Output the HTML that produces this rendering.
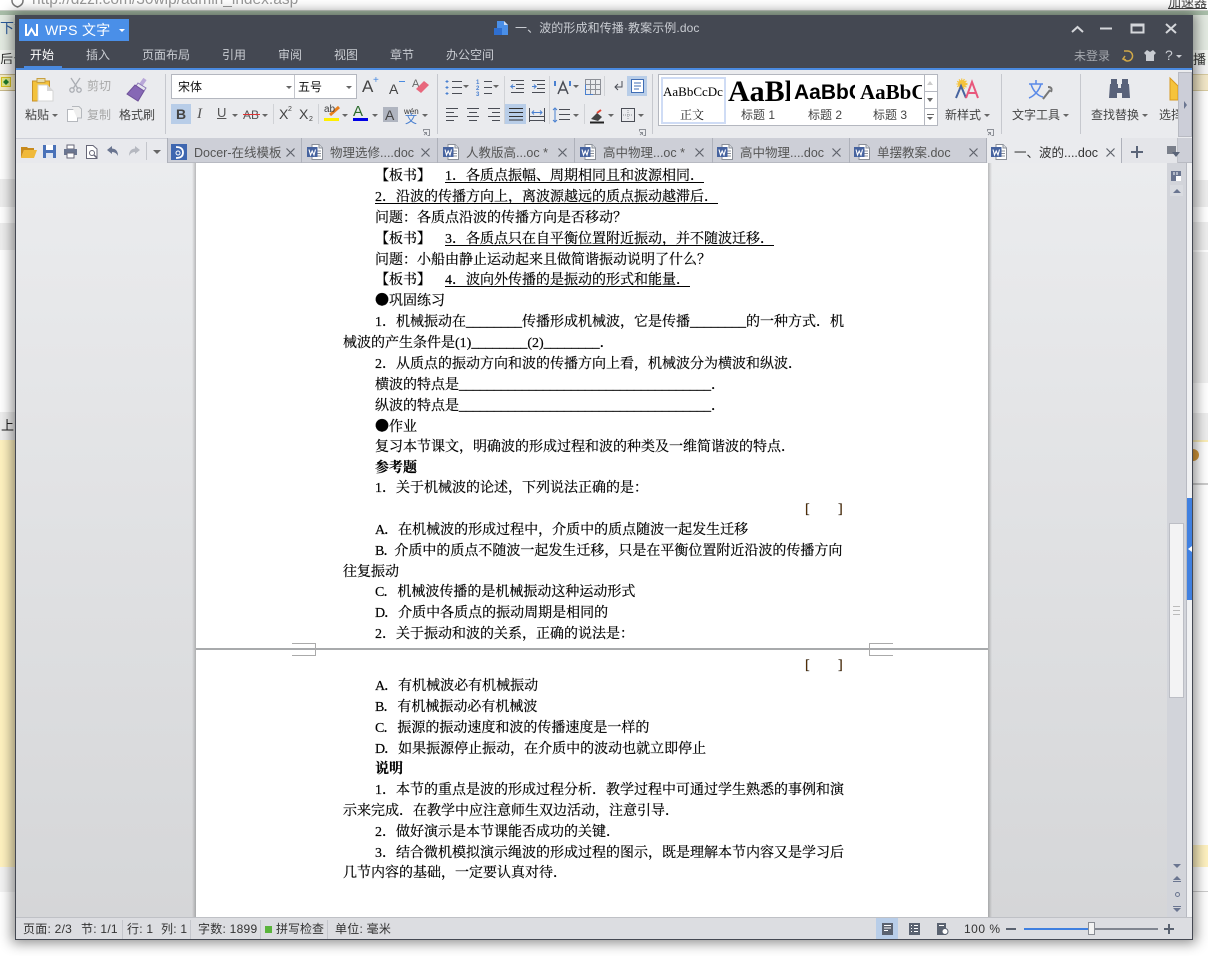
<!DOCTYPE html>
<html lang="zh-CN"><head><meta charset="utf-8"><title>WPS 文字</title>
<style>
html,body{margin:0;padding:0}
body{width:1208px;height:956px;position:relative;overflow:hidden;background:#fff;font-family:"Liberation Sans","Noto Sans CJK SC",sans-serif}
.a{position:absolute}
.t{position:absolute;white-space:pre;font:12px/16px "Liberation Sans","Noto Sans CJK SC",sans-serif;color:#444}
.l{position:absolute;left:375px;margin-top:2px;white-space:pre;font:14px/20px "Liberation Serif","Noto Serif CJK SC",serif;color:#000;-webkit-text-stroke:.2px #000}
.l u{text-underline-offset:2px}
.l b{font-family:"Noto Sans CJK SC",sans-serif;font-weight:normal;font-size:14px}
.l i{font-style:normal;letter-spacing:-1px}
.m{color:#c9ccd2}
.dn{position:absolute;width:0;height:0;border-left:3px solid transparent;border-right:3px solid transparent;border-top:3px solid #666}
.sep{position:absolute;width:1px;background:#c6c8ce}
.tabsep{position:absolute;top:138px;width:1px;height:25px;background:#aeb1ba}
.st{letter-spacing:.25px;color:#333}
svg{position:absolute;overflow:visible}
</style></head><body>
<svg width="0" height="0" style="position:absolute"><defs>
<symbol id="doc" viewBox="0 0 16 16" overflow="visible"><path d="M5 .5H12L15.5 4V15.5H5Z" fill="#fff" stroke="#8a8f98"/><path d="M12 .5V4H15.5" fill="#dfe1e5" stroke="#8a8f98"/><path d="M10 7H14M10 9.5H14M10 12H14" stroke="#8a8f98"/><rect x="0" y="3" width="10.500" height="10" fill="#46639f"/><path d="M2 5.500L3.500 11 5.200 7 7 11 8.500 5.500" fill="none" stroke="#fff" stroke-width="1.100"/></symbol>
<symbol id="cl" viewBox="0 0 9 9" overflow="visible"><path d="M.5 .5L8.500 8.500M8.500 .5L.5 8.500" stroke="#5f636c" stroke-width="1.200" fill="none"/></symbol>
<symbol id="lau" viewBox="0 0 7 7" overflow="visible"><path d="M.5 2.500V.5H6.500V6.500H4.500" fill="none" stroke="#8d9097"/><path d="M1 6L3.500 3.500M3.500 6V3.500H1" fill="none" stroke="#8d9097"/></symbol>
</defs></svg>

<!-- background browser -->
<div class="a" style="left:0;top:0;width:1208px;height:956px;background:#fff"></div>
<div class="a" style="left:0;top:0;width:1208px;height:50px;background:#e4ebe2"></div>
<div class="a" style="left:0;top:50px;width:1208px;height:14px;background:#f3f6f2"></div>
<div class="a" style="left:0;top:0;width:1208px;height:10px;background:#fff;border-bottom:1px solid #c9cfc7"></div>
<div class="a" style="left:0;top:11px;width:1208px;height:4px;background:#a9bea9"></div>
<div class="t" style="left:32px;top:-8px;font-size:15.500px;color:#999">http://dzzi.com/30wip/admin_index.asp</div>
<svg style="left:11px;top:-6px" width="13" height="13"><path d="M6.500 0L12 2V7Q12 11 6.500 13 1 11 1 7V2Z" fill="none" stroke="#777" stroke-width="1.500"/></svg>
<div class="t" style="left:0;top:20px;font-size:14px;color:#2a5a9c">下载</div>
<div class="t" style="left:0;top:52px;font-size:13px;color:#333">后台</div>
<div class="a" style="left:0;top:64px;width:1208px;height:10px;background:#f5f5f5"></div>
<div class="a" style="left:0;top:74px;width:15px;height:15px;background:#f6edc8;border-top:1px solid #c9b98a;border-bottom:1px solid #c9b98a"></div>
<div class="a" style="left:1px;top:77px;width:8px;height:8px;background:#dfe88a;border:1px solid #d8c020"></div>
<svg style="left:3px;top:79px" width="6" height="6"><path d="M3 0V6L0 3ZM3 0L6 3 3 6Z" fill="#1d7a2a"/></svg>
<div class="a" style="left:0;top:179px;width:15px;height:28px;background:#eee"></div>
<div class="a" style="left:0;top:223px;width:15px;height:27px;background:#eee"></div>
<div class="a" style="left:0;top:412px;width:15px;height:28px;background:#eee"></div>
<div class="a" style="left:0;top:440px;width:15px;height:427px;background:#fff2c0"></div>
<div class="a" style="left:0;top:867px;width:15px;height:25px;background:#f3f3f3"></div>
<div class="t" style="left:1px;top:418px;color:#222;font-size:13px">上</div>
<div class="a" style="left:1193px;top:180px;width:15px;height:27px;background:#eee"></div>
<div class="a" style="left:1193px;top:222px;width:15px;height:28px;background:#eee"></div>
<div class="a" style="left:1193px;top:252px;width:15px;height:131px;background:#f0f0f0"></div>
<div class="a" style="left:1193px;top:413px;width:15px;height:27px;background:#eee"></div>
<div class="a" style="left:1193px;top:440px;width:15px;height:2px;background:#fbeeb8"></div>
<div class="a" style="left:1193px;top:483px;width:15px;height:2px;background:#ccc"></div>
<div class="a" style="left:1193px;top:449px;width:6px;height:12px;background:#d79a3c;border-radius:0 6px 6px 0"></div>
<div class="a" style="left:1193px;top:845px;width:15px;height:22px;background:#fff2c0"></div>
<div class="a" style="left:1193px;top:891px;width:15px;height:1px;background:#ccc"></div>
<div class="a" style="left:1193px;top:74px;width:15px;height:15px;background:#f3e8c8;border-top:1px solid #d8cba0;border-bottom:1px solid #d8cba0"></div>
<div class="t" style="left:1193px;top:52px;font-size:13px;color:#333">播</div>
<div class="a" style="left:1168px;top:0;width:40px;height:10px;background:#fff"></div>
<div class="t" style="left:1168px;top:-5px;font-size:13px;color:#444"><u>加速器</u></div>

<!-- window -->
<div class="a" style="left:15px;top:15px;width:1178px;height:925px;background:#eaebee;box-shadow:0 0 12px 3px rgba(0,0,0,.45)"></div>
<div class="a" style="left:15px;top:15px;width:1178px;height:53px;background:#444852"></div>
<div class="a" style="left:15px;top:68px;width:1178px;height:2px;background:#4a8ae0"></div>
<div class="a" style="left:19px;top:19px;width:110px;height:22px;background:#4a8fe8"></div>
<svg style="left:25px;top:23px" width="13" height="13"><path d="M1 1V12H3L6.500 6 10 12H12V1" fill="none" stroke="#fff" stroke-width="2"/></svg>
<div class="t" style="left:45px;top:22px;font-size:14px;color:#fff;letter-spacing:.3px">WPS 文字</div>
<div class="a" style="left:119px;top:29px;border-left:3px solid transparent;border-right:3px solid transparent;border-top:3px solid #fff"></div>
<svg style="left:494px;top:21px" width="14" height="14"><path d="M3 0H10L14 4V14H3Z" fill="#4a8fe8"/><path d="M10 0V4H14" fill="#cfe0f8"/><rect x="0" y="7" width="8" height="7" fill="#2f6fd0"/></svg>
<div class="t m" style="left:515px;top:20px;font-size:12px;letter-spacing:.1px">一、波的形成和传播·教案示例.doc</div>
<svg style="left:1071px;top:23px" width="110" height="12" fill="none" stroke="#d4d6da" stroke-width="2"><path d="M1 9L6.500 4 12 9"/><path d="M29 5.500H41"/><path d="M60.500 1.500H72.500V9.500H60.500Z"/><path d="M60.500 2.500H72.500" stroke-width="2"/><path d="M95 1L105 10M105 1L95 10"/></svg>
<div class="t" style="left:30px;top:47px;color:#fff">开始</div>
<div class="t m" style="left:86px;top:47px">插入</div>
<div class="t m" style="left:142px;top:47px">页面布局</div>
<div class="t m" style="left:222px;top:47px">引用</div>
<div class="t m" style="left:278px;top:47px">审阅</div>
<div class="t m" style="left:334px;top:47px">视图</div>
<div class="t m" style="left:390px;top:47px">章节</div>
<div class="t m" style="left:446px;top:47px">办公空间</div>
<div class="a" style="left:24px;top:66px;width:38px;height:2px;background:#4a8ae0"></div>
<div class="t" style="left:1074px;top:48px;color:#a6a9af">未登录</div>
<svg style="left:1122px;top:50px" width="12" height="12" fill="none" stroke="#d0a848" stroke-width="1.500"><path d="M2 1H6A5 5 0 1 1 1 8"/><path d="M3 6L1 9 4 10"/></svg>
<svg style="left:1144px;top:50px" width="12" height="11"><path d="M3 0L0 3 2 5V11H10V5L12 3 9 0 6 2Z" fill="#c9ccd2"/></svg>
<div class="t" style="left:1165px;top:47px;font-size:14px;color:#c9ccd2">?</div>
<div class="a" style="left:1176px;top:55px;border-left:3px solid transparent;border-right:3px solid transparent;border-top:3px solid #c9ccd2"></div>

<!-- ribbon -->
<div class="a" style="left:15px;top:70px;width:1178px;height:68px;background:#eaebee;border-bottom:1px solid #bfc1c8"></div>
<div class="sep" style="left:165px;top:74px;height:60px"></div>
<div class="sep" style="left:437px;top:74px;height:60px"></div>
<div class="sep" style="left:652px;top:74px;height:60px"></div>
<div class="sep" style="left:1001px;top:74px;height:60px"></div>
<div class="sep" style="left:1080px;top:74px;height:60px"></div>
<div class="sep" style="left:504px;top:76px;height:48px;background:#d0d2d6"></div>
<div class="sep" style="left:549px;top:76px;height:48px;background:#d0d2d6"></div>
<div class="sep" style="left:604px;top:76px;height:20px;background:#d0d2d6"></div>
<div class="sep" style="left:584px;top:104px;height:20px;background:#d0d2d6"></div>
<div class="sep" style="left:273px;top:104px;height:20px;background:#d0d2d6"></div>
<div class="sep" style="left:318px;top:104px;height:20px;background:#d0d2d6"></div>

<svg style="left:32px;top:78px" width="22" height="24"><rect x="0.500" y="3" width="17" height="20" fill="#f3c23c" stroke="#c8922a"/><rect x="5" y="0.500" width="8" height="4" fill="#e7dcae" stroke="#c8a040"/><path d="M6 7H15L21 13V23H6Z" fill="#fff" stroke="#d4d4d4"/><path d="M15 7V13H21" fill="#d8d8d8"/></svg>
<div class="t" style="left:25px;top:107px">粘贴</div><div class="dn" style="left:52px;top:114px"></div>
<svg style="left:69px;top:78px" width="13" height="15" fill="none" stroke="#aaadb3" stroke-width="1.300"><path d="M2 0L8.500 10M11 0L4.500 10"/><circle cx="3" cy="12" r="2.200"/><circle cx="10" cy="12" r="2.200"/></svg>
<div class="t" style="left:87px;top:78px;color:#a8a8a8">剪切</div>
<svg style="left:67px;top:106px" width="15" height="16"><rect x="0.500" y="3.500" width="10" height="12" fill="#fff" stroke="#b5b8bd"/><path d="M5 .5H12L14.500 3V12H10" fill="#eee" stroke="#b5b8bd"/></svg>
<div class="t" style="left:87px;top:107px;color:#a8a8a8">复制</div>
<svg style="left:127px;top:78px" width="21" height="23"><path d="M13 8L18 1" stroke="#b9a8d8" stroke-width="4"/><path d="M11 5L19 10 17 13 9 8Z" fill="#e6e6ee" stroke="#8d7ab8"/><path d="M8 7L17 13 11 23 0 16Z" fill="#8668b5" stroke="#6f5299"/></svg>
<div class="t" style="left:119px;top:107px">格式刷</div>

<div class="a" style="left:171px;top:74px;width:184px;height:23px;background:#fff;border:1px solid #b4b7bf"></div>
<div class="sep" style="left:294px;top:75px;height:23px;background:#c4c6cc"></div>
<div class="t" style="left:178px;top:79px;color:#111">宋体</div><div class="dn" style="left:286px;top:86px"></div>
<div class="t" style="left:298px;top:79px;color:#111">五号</div><div class="dn" style="left:346px;top:86px"></div>
<div class="t" style="left:362px;top:79px;font-size:17px;color:#444">A</div><div class="t" style="left:373px;top:73px;font-size:10px;color:#4a8ae0">+</div>
<div class="t" style="left:389px;top:81px;font-size:14px;color:#444">A</div><div class="a" style="left:399px;top:81px;width:6px;height:1px;background:#4a8ae0"></div>
<div class="t" style="left:412px;top:76px;font-size:11px;color:#666">A</div>
<svg style="left:416px;top:81px" width="13" height="12"><path d="M8 0L13 4 5 12 0 8Z" fill="#e8677c"/></svg>

<div class="a" style="left:171px;top:104px;width:20px;height:20px;background:#b8cde8"></div>
<div class="t" style="left:176px;top:106px;font-size:14px;font-weight:bold;color:#444">B</div>
<div class="t" style="left:197px;top:106px;font:italic 15px/16px 'Liberation Serif',serif;color:#555">I</div>
<div class="t" style="left:217px;top:105px;font-size:13px;color:#555"><u>U</u></div><div class="dn" style="left:232px;top:114px"></div>
<div class="t" style="left:243px;top:107px;font-size:12px;color:#555">AB</div><div class="a" style="left:243px;top:114px;width:17px;height:1px;background:#d33"></div><div class="dn" style="left:262px;top:114px"></div>
<div class="t" style="left:279px;top:106px;font-size:14px;color:#444">X</div><div class="t" style="left:288px;top:102px;font-size:7px;color:#444">2</div>
<div class="t" style="left:299px;top:106px;font-size:14px;color:#444">X</div><div class="t" style="left:309px;top:112px;font-size:7px;color:#444">2</div>
<svg style="left:324px;top:106px" width="16" height="15"><path d="M15 1L6 9" stroke="#e87f1c" stroke-width="3"/><rect x="0" y="12" width="15" height="3" fill="#ffef00"/></svg>
<div class="t" style="left:324px;top:102px;font-size:10px;color:#444">ab</div><div class="dn" style="left:342px;top:114px"></div>
<div class="t" style="left:353px;top:104px;font-size:15px;color:#2a6a2a">A</div><div class="a" style="left:353px;top:118px;width:15px;height:3px;background:#0000e6"></div><div class="dn" style="left:372px;top:114px"></div>
<div class="a" style="left:383px;top:107px;width:15px;height:15px;background:#b0b5c0"></div><div class="t" style="left:385px;top:107px;font-size:14px;color:#444">A</div>
<div class="t" style="left:404px;top:104px;font-size:8px;color:#333">wén</div><div class="t" style="left:405px;top:111px;font-size:12px;color:#4a80d0">文</div><div class="dn" style="left:422px;top:114px"></div>
<svg style="left:423px;top:129px" width="7" height="7"><use href="#lau"/></svg>

<!-- paragraph group -->
<svg style="left:445px;top:79px" width="200" height="16" fill="none" stroke="#4a4d55">
<path d="M7 2.500H17M7 8.500H17M7 14.500H17"/><path d="M2 1V4M2 7V10M2 13V16M.5 2.500H3.500M.5 8.500H3.500M.5 14.500H3.500" stroke="#4a80d0"/>
<path d="M39 2.500H47M39 8.500H47M39 14.500H47"/><text x="31" y="5" font-size="6" font-weight="bold" fill="#4a80d0" stroke="none" font-family="Liberation Sans">1</text><text x="31" y="11" font-size="6" font-weight="bold" fill="#4a80d0" stroke="none" font-family="Liberation Sans">2</text><text x="31" y="17" font-size="6" font-weight="bold" fill="#4a80d0" stroke="none" font-family="Liberation Sans">3</text>
<path d="M66 1.500H79M71 5.500H79M71 9.500H79M66 13.500H79"/><path d="M70 7.500H66L68 5.500M66 7.500L68 9.500" stroke="#4a80d0"/>
<path d="M87 1.500H100M92 5.500H100M92 9.500H100M87 13.500H100"/><path d="M87 7.500H91L89 5.500M91 7.500L89 9.500" stroke="#4a80d0"/>
<path d="M113 15L118 3 123 15M115 11H121" stroke-width="1.500"/><path d="M110 2V7M125 2V7" stroke="#4a80d0" stroke-width="2"/>
<path d="M140.500 .5H155.500V15.500H140.500ZM145.500 .5V15.500M150.500 .5V15.500M140.500 5.500H155.500M140.500 10.500H155.500" stroke="#8d9097"/><path d="M140.500 5.500V15.500H148" stroke="#4a80d0"/>
<path d="M177 2V8H170M173 5L170 8 173 11"/>
</svg>
<div class="dn" style="left:463px;top:85px"></div><div class="dn" style="left:493px;top:85px"></div><div class="dn" style="left:573px;top:85px"></div>
<div class="a" style="left:627px;top:76px;width:20px;height:20px;background:#b8cde8"></div>
<svg style="left:631px;top:79px" width="13" height="14" fill="none" stroke="#3f6db5"><rect x=".5" y=".5" width="12" height="13" fill="#fff"/><path d="M3 4H10M3 7H10M3 10H8"/></svg>
<svg style="left:446px;top:107px" width="200" height="16" fill="none" stroke="#4a4d55">
<path d="M0 1.500H12M0 5.500H8M0 9.500H12M0 13.500H8"/><path d="M21 1.500H33M23 5.500H31M21 9.500H33M23 13.500H31"/><path d="M42 1.500H54M46 5.500H54M42 9.500H54M46 13.500H54"/>
<path d="M83.500 1V15M98.500 1V15M84 13.500H98M84 9.500H98"/><path d="M86 5.500H96M88 3.500L86 5.500 88 7.500M94 3.500L96 5.500 94 7.500" stroke="#4a80d0"/>
<path d="M113 2.500H124M113 7.500H124M113 12.500H124"/><path d="M111 1V15M109 3L111 1 113 3M109 13L111 15 113 13" stroke="#4a80d0" transform="translate(-2 0)"/>
<path d="M145 12L151 6 156 10 152 14Z" fill="#444" stroke="none"/><path d="M144 15.500H158" stroke-width="2" stroke="#222"/><path d="M151 6L155 3" stroke="#d43" stroke-width="2"/>
<path d="M175.500 1.500H188.500V14.500H175.500Z"/><path d="M182 3V13M177 8H187" stroke-dasharray="1 1" stroke="#8d9097"/>
</svg>
<div class="a" style="left:505px;top:104px;width:21px;height:20px;background:#b8cde8"></div>
<svg style="left:509px;top:108px" width="14" height="12" stroke="#333"><path d="M0 .5H14M0 4.500H14M0 8.500H14M0 12H14"/></svg>
<div class="dn" style="left:573px;top:114px"></div><div class="dn" style="left:608px;top:114px"></div><div class="dn" style="left:638px;top:114px"></div>
<svg style="left:639px;top:129px" width="7" height="7"><use href="#lau"/></svg>

<!-- style gallery -->
<div class="a" style="left:658px;top:74px;width:278px;height:50px;background:#fff;border:1px solid #b4b7bf"></div>
<div class="a" style="left:661px;top:77px;width:61px;height:43px;border:2px solid #cfdcf5"></div>
<div class="a" style="left:663px;top:83px;width:60px;height:18px;overflow:hidden;white-space:pre;font:13px/18px 'Liberation Serif',serif;color:#000">AaBbCcDc</div>
<div class="t" style="left:680px;top:107px;color:#222;font-family:'Noto Serif CJK SC',serif">正文</div>
<div class="a" style="left:728px;top:74px;width:62px;height:36px;overflow:hidden;white-space:pre;font:bold 30px/36px 'Liberation Serif',serif;color:#000">AaBl</div>
<div class="t" style="left:741px;top:107px">标题 1</div>
<div class="a" style="left:794px;top:80px;width:61px;height:25px;overflow:hidden;white-space:pre;font:bold 21px/25px 'Liberation Sans',sans-serif;color:#000">AaBbC</div>
<div class="t" style="left:808px;top:107px">标题 2</div>
<div class="a" style="left:860px;top:80px;width:62px;height:25px;overflow:hidden;white-space:pre;font:bold 21px/25px 'Liberation Serif',serif;color:#000">AaBbC</div>
<div class="t" style="left:873px;top:107px">标题 3</div>
<div class="a" style="left:924px;top:75px;width:12px;height:50px;background:#fff;border-left:1px solid #b4b7bf"></div>
<div class="a" style="left:924px;top:91px;width:13px;height:1px;background:#b4b7bf"></div>
<div class="a" style="left:924px;top:108px;width:13px;height:1px;background:#b4b7bf"></div>
<div class="a" style="left:927px;top:81px;border-left:3px solid transparent;border-right:3px solid transparent;border-bottom:4px solid #ccc"></div>
<div class="a" style="left:927px;top:98px;border-left:3px solid transparent;border-right:3px solid transparent;border-top:4px solid #666"></div>
<div class="a" style="left:927px;top:114px;width:7px;height:1px;background:#666"></div>
<div class="a" style="left:927px;top:117px;border-left:3px solid transparent;border-right:3px solid transparent;border-top:3px solid #666"></div>
<svg style="left:987px;top:129px" width="7" height="7"><use href="#lau"/></svg>

<svg style="left:955px;top:78px" width="26" height="21"><circle cx="7" cy="6" r="4" fill="#f5c33c" stroke="#f5c33c" stroke-dasharray="1 1" stroke-width="3"/><path d="M1 20L6 8 11 20" stroke="#46639f" stroke-width="2" fill="none"/><path d="M11 20L17 4 23 20M13 15H21" stroke="#e8577c" stroke-width="2" fill="none"/></svg>
<div class="t" style="left:945px;top:107px">新样式</div><div class="dn" style="left:984px;top:114px"></div>
<svg style="left:1029px;top:78px" width="24" height="24" fill="none"><path d="M0 6H14M7 2V6M2 6C4 13 9 18 14 19M12 6C10 13 5 18 0 20" stroke="#5a8ae8" stroke-width="1.500"/><path d="M14 21L21 12M19 9Q24 9 22 14" stroke="#777" stroke-width="2"/></svg>
<div class="t" style="left:1012px;top:107px">文字工具</div><div class="dn" style="left:1063px;top:114px"></div>
<svg style="left:1109px;top:79px" width="21" height="20" fill="#59627a"><rect x="2" y="0" width="6" height="5"/><rect x="13" y="0" width="6" height="5"/><path d="M1 5H9V9H12V5H20L21 19H13V14H8V19H0Z"/></svg>
<div class="t" style="left:1091px;top:107px">查找替换</div><div class="dn" style="left:1142px;top:114px"></div>
<svg style="left:1170px;top:78px" width="8" height="22"><path d="M0 0L8 8V22H0Z" fill="#f5c33c" stroke="#d89a20"/></svg>
<div class="a" style="left:1159px;top:107px;width:19px;height:16px;overflow:hidden;white-space:pre;font:12px/16px 'Liberation Sans','Noto Sans CJK SC',sans-serif;color:#444">选择</div>
<div class="a" style="left:1178px;top:72px;width:14px;height:65px;background:#ccced8;border:1px solid #b8bac2;box-sizing:border-box"></div>
<div class="a" style="left:1184px;top:101px;border-top:4px solid transparent;border-bottom:4px solid transparent;border-left:3px solid #6a7590"></div>

<!-- tab bar -->
<div class="a" style="left:15px;top:138px;width:1178px;height:25px;background:#cdcfd7;border-bottom:1px solid #b8bac2;box-sizing:border-box"></div>
<div class="a" style="left:15px;top:139px;width:152px;height:24px;background:#e8e9ed"></div>
<svg style="left:21px;top:145px" width="16" height="13"><path d="M0 2H6L7 3H13V5H3L0 13Z" fill="#c88a1c"/><path d="M3 5H16L13 13H0Z" fill="#f0b93a"/></svg>
<svg style="left:43px;top:145px" width="13" height="13"><rect width="13" height="13" fill="#4a72b8"/><rect x="3" y="0" width="7" height="5" fill="#fff"/><rect x="3" y="8" width="7" height="5" fill="#dfe6f2"/></svg>
<svg style="left:64px;top:145px" width="13" height="13"><rect x="3" y="0" width="7" height="4" fill="#fff" stroke="#667"/><rect x="0" y="4" width="13" height="6" fill="#6a7590"/><rect x="3" y="8" width="7" height="5" fill="#fff" stroke="#667"/></svg>
<svg style="left:86px;top:145px" width="12" height="14" fill="none" stroke="#667"><path d="M.5 .5H7L11 4V13.500H.5Z" fill="#fff"/><circle cx="6" cy="8" r="2.500"/><path d="M8 10L11 13" stroke-width="1.500"/></svg>
<svg style="left:107px;top:146px" width="11" height="10"><path d="M0 4L5 0V2.500Q11 3 11 10 9 6 5 6V8Z" fill="#6a7590"/></svg>
<svg style="left:129px;top:146px" width="11" height="10"><path d="M11 4L6 0V2.500Q0 3 0 10 2 6 6 6V8Z" fill="#b5b8c0"/></svg>
<div class="a" style="left:146px;top:142px;width:1px;height:18px;background:#c4c6cc"></div>
<div class="a" style="left:153px;top:150px;border-left:4px solid transparent;border-right:4px solid transparent;border-top:4px solid #666"></div>
<div class="tabsep" style="left:167px"></div><div class="tabsep" style="left:301px"></div><div class="tabsep" style="left:437px"></div><div class="tabsep" style="left:574px"></div><div class="tabsep" style="left:712px"></div><div class="tabsep" style="left:849px"></div>
<svg style="left:171px;top:144px" width="16" height="16"><rect width="16" height="16" fill="#3f67b0"/><path d="M5 3Q12 3 12 8.500T5 14" fill="none" stroke="#fff" stroke-width="1.800"/><circle cx="7" cy="9" r="2" fill="none" stroke="#fff"/></svg>
<div class="t" style="left:194px;top:145px;font-size:12.500px;color:#555">Docer-在线模板</div><svg style="left:286px;top:148px" width="9" height="9"><use href="#cl"/></svg>
<svg style="left:307px;top:144px" width="16" height="16"><use href="#doc"/></svg><div class="t" style="left:330px;top:145px;font-size:12.500px;color:#555">物理选修....doc</div><svg style="left:421px;top:148px" width="9" height="9"><use href="#cl"/></svg>
<svg style="left:443px;top:144px" width="16" height="16"><use href="#doc"/></svg><div class="t" style="left:466px;top:145px;font-size:12.500px;color:#555">人教版高...oc *</div><svg style="left:558px;top:148px" width="9" height="9"><use href="#cl"/></svg>
<svg style="left:580px;top:144px" width="16" height="16"><use href="#doc"/></svg><div class="t" style="left:603px;top:145px;font-size:12.500px;color:#555">高中物理...oc *</div><svg style="left:695px;top:148px" width="9" height="9"><use href="#cl"/></svg>
<svg style="left:717px;top:144px" width="16" height="16"><use href="#doc"/></svg><div class="t" style="left:740px;top:145px;font-size:12.500px;color:#555">高中物理....doc</div><svg style="left:832px;top:148px" width="9" height="9"><use href="#cl"/></svg>
<svg style="left:854px;top:144px" width="16" height="16"><use href="#doc"/></svg><div class="t" style="left:877px;top:145px;font-size:12.500px;color:#555">单摆教案.doc</div><svg style="left:969px;top:148px" width="9" height="9"><use href="#cl"/></svg>
<div class="a" style="left:986px;top:138px;width:136px;height:25px;background:#eaebee;border-left:1px solid #aeb1ba;border-right:1px solid #aeb1ba;box-sizing:border-box"></div>
<svg style="left:991px;top:144px" width="16" height="16"><use href="#doc"/></svg><div class="t" style="left:1014px;top:145px;font-size:12.500px;color:#333">一、波的....doc</div><svg style="left:1106px;top:148px" width="9" height="9"><use href="#cl"/></svg>
<div class="a" style="left:1122px;top:138px;width:56px;height:25px;background:#e4e5e9;border-right:1px solid #c0c2c8;box-sizing:border-box"></div>
<svg style="left:1131px;top:146px" width="12" height="12" stroke="#5a6478" stroke-width="2"><path d="M6 0V12M0 6H12"/></svg>
<svg style="left:1167px;top:146px" width="13" height="11"><rect width="9" height="8" fill="#7a7f8a"/><path d="M5 6H13L9 11Z" fill="#5a6478"/></svg>

<!-- doc area -->
<div class="a" style="left:15px;top:163px;width:1178px;height:754px;background:linear-gradient(#ebecee,#d5d6d8)"></div>
<div class="a" style="left:192px;top:163px;width:4px;height:754px;background:linear-gradient(90deg,rgba(0,0,0,0),rgba(0,0,0,.22))"></div>
<div class="a" style="left:988px;top:163px;width:4px;height:754px;background:linear-gradient(90deg,rgba(0,0,0,.22),rgba(0,0,0,0))"></div>
<div class="a" style="left:196px;top:163px;width:792px;height:754px;background:#fff"></div>
<div class="a" style="left:196px;top:648px;width:792px;height:2px;background:#a8aaac"></div>
<div class="a" style="left:292px;top:643px;width:23px;height:11px;border:1px solid #aaa;border-left:0"></div>
<div class="a" style="left:869px;top:643px;width:23px;height:11px;border:1px solid #aaa;border-right:0"></div>

<div class="l" style="top:165px">【板书】</div><div class="l" style="top:165px;left:445px"><u>1．各质点振幅、周期相同且和波源相同．</u></div>
<div class="l" style="top:186px"><u>2．沿波的传播方向上，离波源越远的质点振动越滞后．</u></div>
<div class="l" style="top:207px">问题：各质点沿波的传播方向是否移动？</div>
<div class="l" style="top:228px">【板书】</div><div class="l" style="top:228px;left:445px"><u>3．各质点只在自平衡位置附近振动，并不随波迁移．</u></div>
<div class="l" style="top:249px">问题：小船由静止运动起来且做简谐振动说明了什么？</div>
<div class="l" style="top:269px">【板书】</div><div class="l" style="top:269px;left:445px"><u>4．波向外传播的是振动的形式和能量．</u></div>
<div class="l" style="top:288px"><b>●</b>巩固练习</div>
<div class="l" style="top:311px">1．机械振动在________传播形成机械波，它是传播________的一种方式．机</div>
<div class="l" style="top:332px;left:343px">械波的产生条件是(1)________(2)________．</div>
<div class="l" style="top:353px">2．从质点的振动方向和波的传播方向上看，机械波分为横波和纵波．</div>
<div class="l" style="top:374px">横波的特点是____________________________________．</div>
<div class="l" style="top:395px">纵波的特点是____________________________________．</div>
<div class="l" style="top:414px"><b>●</b>作业</div>
<div class="l" style="top:436px">复习本节课文，明确波的形成过程和波的种类及一维简谐波的特点．</div>
<div class="l" style="top:457px;font-weight:bold">参考题</div>
<div class="l" style="top:477px">1．关于机械波的论述，下列说法正确的是：</div>
<div class="l" style="top:498px;left:805px;color:#5a3000">[</div><div class="l" style="top:498px;left:838px;color:#5a3000">]</div>
<div class="l" style="top:519px"><i>A</i>．在机械波的形成过程中，介质中的质点随波一起发生迁移</div>
<div class="l" style="top:540px"><i>B</i><i style="letter-spacing:-3px">．</i>介质中的质点不随波一起发生迁移，只是在平衡位置附近沿波的传播方向</div>
<div class="l" style="top:561px;left:343px">往复振动</div>
<div class="l" style="top:581px"><i>C</i>．机械波传播的是机械振动这种运动形式</div>
<div class="l" style="top:602px"><i>D</i>．介质中各质点的振动周期是相同的</div>
<div class="l" style="top:623px">2．关于振动和波的关系，正确的说法是：</div>
<div class="l" style="top:654px;left:805px;color:#5a3000">[</div><div class="l" style="top:654px;left:838px;color:#5a3000">]</div>
<div class="l" style="top:675px"><i>A</i>．有机械波必有机械振动</div>
<div class="l" style="top:696px"><i>B</i>．有机械振动必有机械波</div>
<div class="l" style="top:717px"><i>C</i>．振源的振动速度和波的传播速度是一样的</div>
<div class="l" style="top:738px"><i>D</i>．如果振源停止振动，在介质中的波动也就立即停止</div>
<div class="l" style="top:758px;font-weight:bold">说明</div>
<div class="l" style="top:779px">1．本节的重点是波的形成过程分析．教学过程中可通过学生熟悉的事例和演</div>
<div class="l" style="top:800px;left:343px">示来完成．在教学中应注意师生双边活动，注意引导．</div>
<div class="l" style="top:821px">2．做好演示是本节课能否成功的关键．</div>
<div class="l" style="top:842px">3．结合微机模拟演示绳波的形成过程的图示，既是理解本节内容又是学习后</div>
<div class="l" style="top:862px;left:343px">几节内容的基础，一定要认真对待．</div>

<!-- scrollbars -->
<div class="a" style="left:1167px;top:163px;width:19px;height:754px;background:#d2d4da"></div>
<div class="a" style="left:1186px;top:163px;width:6px;height:754px;background:#f0f1f3;border-left:1px solid #b8bac2;box-sizing:border-box"></div>
<div class="a" style="left:1187px;top:498px;width:5px;height:102px;background:#4080e0"></div>
<div class="a" style="left:1188px;top:546px;border-top:3px solid transparent;border-bottom:3px solid transparent;border-right:4px solid #fff"></div>
<svg style="left:1171px;top:171px" width="10" height="10"><rect width="10" height="10" fill="#6a7590"/><path d="M3 1V4M6 1V4" stroke="#fff"/><rect x="5" y="5" width="5" height="5" fill="#fff"/></svg>
<div class="a" style="left:1170px;top:185px;width:13px;height:11px;background:#d9dbe0"></div>
<div class="a" style="left:1173px;top:189px;border-left:4px solid transparent;border-right:4px solid transparent;border-bottom:4px solid #6a7590"></div>
<div class="a" style="left:1169px;top:523px;width:15px;height:175px;background:#f3f3f4;border:1px solid #bcbec5;box-sizing:border-box"></div>
<div class="a" style="left:1173px;top:606px;width:7px;height:1px;background:#bbb"></div>
<div class="a" style="left:1173px;top:610px;width:7px;height:1px;background:#bbb"></div>
<div class="a" style="left:1173px;top:614px;width:7px;height:1px;background:#bbb"></div>
<div class="a" style="left:1173px;top:864px;border-left:4px solid transparent;border-right:4px solid transparent;border-top:4px solid #6a7590"></div>
<div class="a" style="left:1173px;top:876px;border-left:4px solid transparent;border-right:4px solid transparent;border-bottom:4px solid #6a7590"></div>
<div class="a" style="left:1173px;top:881px;width:8px;height:1px;background:#6a7590"></div>
<div class="a" style="left:1175px;top:892px;width:3px;height:3px;border:1px solid #6a7590;border-radius:50%"></div>
<div class="a" style="left:1173px;top:906px;width:8px;height:1px;background:#6a7590"></div>
<div class="a" style="left:1173px;top:908px;border-left:4px solid transparent;border-right:4px solid transparent;border-top:4px solid #6a7590"></div>

<!-- status bar -->
<div class="a" style="left:15px;top:917px;width:1178px;height:23px;background:#dcdde1;border-top:1px solid #bfc1c6;box-sizing:border-box"></div>
<div class="t st" style="left:23px;top:921px">页面: 2/3</div>
<div class="t st" style="left:81px;top:921px">节: 1/1</div>
<div class="sep" style="left:122px;top:920px;height:19px;background:#c4c6cc"></div>
<div class="t st" style="left:127px;top:921px">行: 1</div>
<div class="t st" style="left:161px;top:921px">列: 1</div>
<div class="sep" style="left:190px;top:920px;height:19px;background:#c4c6cc"></div>
<div class="t st" style="left:198px;top:921px">字数: 1899</div>
<div class="sep" style="left:260px;top:920px;height:19px;background:#c4c6cc"></div>
<div class="a" style="left:265px;top:926px;width:7px;height:7px;background:#5ab43c"></div>
<div class="t" style="left:276px;top:921px;color:#333">拼写检查</div>
<div class="sep" style="left:327px;top:920px;height:19px;background:#c4c6cc"></div>
<div class="t st" style="left:335px;top:921px">单位: 毫米</div>
<div class="a" style="left:876px;top:918px;width:22px;height:22px;background:#b8cde8"></div>
<svg style="left:882px;top:923px" width="11" height="12"><rect width="11" height="12" fill="#5a6270"/><path d="M2 2.500H9M2 5H9M2 7.500H6" stroke="#fff"/></svg>
<svg style="left:909px;top:923px" width="11" height="12"><rect width="11" height="12" fill="#5a6270"/><path d="M2 2.500H3M5 2.500H9M2 5.500H3M5 5.500H9M2 8.500H3M5 8.500H9" stroke="#fff"/></svg>
<svg style="left:937px;top:923px" width="11" height="12"><rect width="9" height="12" fill="#5a6270"/><path d="M2 2.500H7" stroke="#fff"/><circle cx="8" cy="8.500" r="3" fill="#fff" stroke="#5a6270"/></svg>
<div class="t st" style="left:964px;top:921px;letter-spacing:.5px">100 %</div>
<div class="a" style="left:1006px;top:928px;width:10px;height:2px;background:#5a6270"></div>
<div class="a" style="left:1024px;top:928px;width:134px;height:2px;background:#808590"></div>
<div class="a" style="left:1024px;top:928px;width:65px;height:2px;background:#4080e0"></div>
<div class="a" style="left:1088px;top:922px;width:7px;height:13px;background:#f3f3f3;border:1px solid #8a8d94;box-sizing:border-box"></div>
<div class="a" style="left:1164px;top:928px;width:10px;height:2px;background:#5a6270"></div>
<div class="a" style="left:1168px;top:924px;width:2px;height:10px;background:#5a6270"></div>

<!-- window border -->
<div class="a" style="left:15px;top:15px;width:1178px;height:925px;border:1px solid #444852;box-sizing:border-box;pointer-events:none"></div>
</body></html>
